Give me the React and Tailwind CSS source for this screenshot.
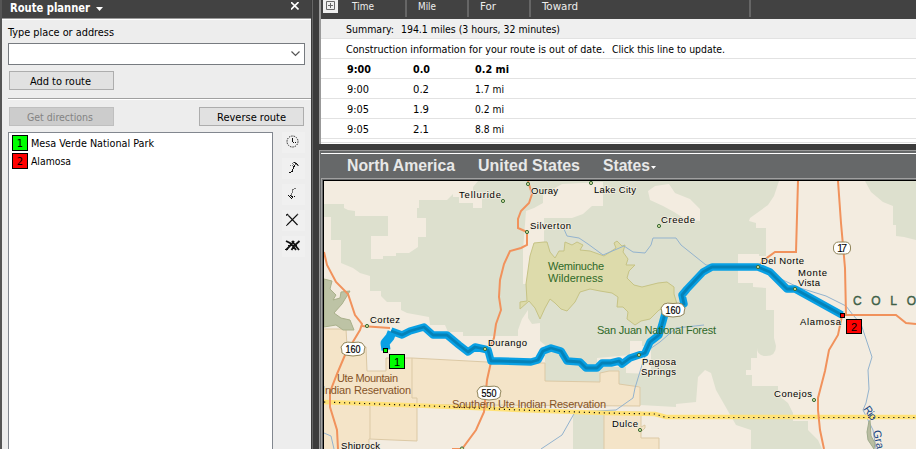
import React from "react";

const UI = "font-['DejaVu_Sans_Condensed','DejaVu_Sans',sans-serif]";

const ROWS = [
  ["9:00", "0.0", "0.2 mi", true],
  ["9:00", "0.2", "1.7 mi", false],
  ["9:05", "1.9", "0.2 mi", false],
  ["9:05", "2.1", "8.8 mi", false],
];

/* Text fitted to a known width */
function Fit({ children, w, size = 11, bold, color = "#000", family = "'DejaVu Sans Condensed','DejaVu Sans',sans-serif" }) {
  return (
    <svg width={w} height="16" className="block shrink-0 overflow-visible">
      <text x="0" y="12" textLength={w} lengthAdjust="spacingAndGlyphs" fontSize={size} fontWeight={bold ? 700 : 400} fill={color} fontFamily={family} xmlSpace="preserve">
        {children}
      </text>
    </svg>
  );
}

function Tool({ children }) {
  return (
    <div className="h-[21px] w-[23px] bg-[#f0f0f0]">
      <svg width="23" height="21" fill="none" stroke="#111" strokeWidth="1" shapeRendering="crispEdges">{children}</svg>
    </div>
  );
}

function Stop({ n, name, w, color }) {
  return (
    <div className="flex h-[18px] items-center">
      <div className="flex h-4 w-4 items-center justify-center border border-black" style={{ background: color }}>
        <span className={`${UI} text-[11px] leading-none`}>{n}</span>
      </div>
      <div className="ml-[3px]"><Fit w={w}>{name}</Fit></div>
    </div>
  );
}

function Planner() {
  return (
    <div className="flex h-[449px] w-[311px] shrink-0 border-l-2 border-[#555] bg-[#ededed]">
      <div className="w-[309px]">
        <div className="flex h-[18px] items-center bg-[#424242]">
          <div className="ml-2 -mt-[3px]"><Fit w={80} size={12} bold color="#fff">Route planner</Fit></div>
          <svg width="8" height="5" className="ml-[6px]"><path d="M0 0H7L3.5 4Z" fill="#fff" /></svg>
          <svg width="8" height="8" className="mb-[7px] ml-auto mr-[12px]"><path d="M0 0L7.5 7.5M7.5 0L0 7.5" stroke="#fff" strokeWidth="1.6" /></svg>
        </div>
        <div className="border-t border-[#999]">
          <div className="border-t border-white pl-[6px] pt-[4px]">
            <Fit w={106}>Type place or address</Fit>
            <div className="mt-[3px] flex h-[22px] w-[297px] items-center justify-end border border-[#777b80] bg-white pr-[4px]">
              <svg width="9" height="6" fill="none" stroke="#555"><path d="M.5 .5L4.5 4.5L8.5 .5" strokeWidth="1.2" /></svg>
            </div>
            <div className="ml-px mt-[6px] flex h-[19px] w-[105px] items-center justify-center border border-[#adadad] bg-[#e1e1e1] pr-[2px]"><Fit w={61}>Add to route</Fit></div>
            <div className="mt-[8px] border-t border-[#a0a0a0]"><div className="border-t border-white" /></div>
            <div className="mt-[7px] flex justify-between pl-px pr-[7px]">
              <div className="flex h-[19px] w-[105px] items-center justify-center border border-[#bfbfbf] bg-[#ccc] pr-[3px]"><Fit w={66} color="#838383">Get directions</Fit></div>
              <div className="flex h-[19px] w-[105px] items-center justify-center border border-[#adadad] bg-[#e1e1e1]"><Fit w={69}>Reverse route</Fit></div>
            </div>
            <div className="mt-[6px] flex">
              <div className="h-[330px] w-[265px] border border-[#82878f] bg-white pl-[3px] pt-[1px]">
                <Stop n="1" name="Mesa Verde National Park" w={123} color="#00ff00" />
                <Stop n="2" name="Alamosa" w={40} color="#ff0000" />
              </div>
              <div className="ml-[9px] flex flex-col gap-[5px]">
                <Tool>
                  <circle cx="10.5" cy="9.5" r="5.5" strokeDasharray="1.3 1.1" shapeRendering="auto" />
                  <path d="M10.5 6V10H14" strokeDasharray="1.5 .5" />
                </Tool>
                <Tool>
                  <path d="M7 14.5H9M9 13.5H11M10.5 13V11M11.5 11V8M12.5 9V7" />
                  <path d="M8.5 7.5L12.5 4L16 7.5L12.5 6.5Z" stroke="#777" strokeDasharray="1 1" />
                  <path d="M12 4.5H13M13 5.5H15M15 6.5H16" />
                </Tool>
                <Tool>
                  <path d="M14 4.5H12M12 5.5H10M10.5 6V9M9.5 9V12" stroke="#777" />
                  <path d="M6 11.5H9M7 12.5H10M8 13.5H11M9 14.5H10M10 12.5H13" strokeDasharray="1 1" />
                </Tool>
                <Tool>
                  <path d="M5 4L15.5 15M16 4L5 15" strokeWidth="1.1" shapeRendering="auto" />
                  <path d="M4 4.5H6M4 5.5H7M15 14.5H17M4 15.5H6M15 4.5H17" stroke="#444" strokeDasharray="1 1" />
                </Tool>
                <Tool>
                  <path d="M4 5L8 7L11 10L14 14M12 5L8 10L4 14M10 5L13 9L17 14M17.5 5L12 10L9.5 14" strokeWidth="1.8" shapeRendering="auto" />
                  <path d="M3 13.5H6M6 9.5H15" strokeWidth="1.2" />
                </Tool>
              </div>
            </div>
          </div>
        </div>
      </div>
    </div>
  );
}

function Directions() {
  return (
    <div className="h-[144px] border-l-2 border-[#999] bg-white">
      <div className="flex h-[19px] bg-[#424242]">
        <div className="ml-[2px] flex h-[13px] w-[15px] justify-center bg-[#eee]">
          <svg width="9" height="11" fill="none" stroke="#666"><path d="M.5 1.5H8.5V9.5H.5ZM2 5.5H7M4.5 3V8" /></svg>
        </div>
        <div className="-mt-[2px] ml-[14px] w-[53px]"><Fit w={22} color="#eee">Time</Fit></div>
        <div className="flex h-[17px] w-[62px] border-l-2 border-[#666] pl-[11px]"><div className="-mt-[2px]"><Fit w={18} color="#eee">Mile</Fit></div></div>
        <div className="flex h-[17px] w-[62px] border-l-2 border-[#666] pl-[11px]"><div className="-mt-[2px]"><Fit w={16} color="#eee">For</Fit></div></div>
        <div className="flex h-[17px] w-[220px] border-l-2 border-[#666] pl-[11px]"><div className="-mt-[2px]"><Fit w={36} color="#eee">Toward</Fit></div></div>
        <div className="h-[17px] w-[2px] bg-[#666]" />
      </div>
      <div className="flex h-[20px] items-center border-b border-[#e2e2e2] bg-[#efefef] pl-[25px]"><Fit w={48}>Summary:</Fit><div className="ml-[7px]"><Fit w={159}>194.1 miles (3 hours, 32 minutes)</Fit></div></div>
      <div className="flex h-[20px] items-center border-b border-[#e2e2e2] pl-[25px]"><Fit w={259}>Construction information for your route is out of date.</Fit><div className="ml-[7px]"><Fit w={113}>Click this line to update.</Fit></div></div>
      {ROWS.map(([t, m, f, b], i) => (
        <div key={i} className="flex h-[20px] items-center border-b border-[#e2e2e2] pl-[26px]">
          <div className="w-[66px]"><Fit w={b ? 24 : 22} bold={b}>{t}</Fit></div>
          <div className="w-[62px]"><Fit w={b ? 17 : 16} bold={b}>{m}</Fit></div>
          <Fit w={b ? 34 : 29} bold={b}>{f}</Fit>
        </div>
      ))}
      <div className="mt-[3px] h-px bg-[#e0e0e0]" />
    </div>
  );
}

const CITIES = [
  [503, 201, "Telluride", 459, 198, 42],
  [528, 184, "Ouray", 531, 194, 27],
  [591, 183, "Lake City", 594, 193, 42],
  [527, 232, "Silverton", 530, 229, 41],
  [659, 226, "Creede", 661, 223, 34],
  [758, 267, "Del Norte", 761, 264, 43],
  [795, 289, "Monte", 798, 276, 29],
  [367, 326, "Cortez", 370, 323, 30],
  [485, 349, "Durango", 488, 346, 39],
  [639, 355, "Pagosa", 642, 365, 34],
  [640, 430, "Dulce", 612, 427, 26],
  [814, 400, "Conejos", 774, 397, 38],
];

const HALO = { paintOrder: "stroke" };

function Shield({ x, y, w, n }) {
  const h = w / 2;
  return (
    <g transform={`translate(${x} ${y})`}>
      <path d={`M${-h + 3} -6Q${-h / 2} -7.5 0 -6.5Q${h / 2} -7.5 ${h - 3} -6L${h} -2Q${h - 1} 1 ${h - 1} 4Q${h - 5} 7 4 6.5L0 7L-4 6.5Q${-h + 5} 7 ${-h + 1} 4Q${-h + 1} 1 ${-h} -2Z`} fill="#fff" stroke="#91855a" />
      <text x="-7.5" y="4" fontSize="11" textLength="15" lengthAdjust="spacingAndGlyphs" fill="#000" stroke="#000" strokeWidth=".2">{n}</text>
    </g>
  );
}

const LINE = "M391 331L402 335L410 331L424 327L433 335L447 335L459 345L468 352L475 347L484 349L488 350L491 361L500 361L531 362L538 360L543 351L551 348L561 351L567 361L580 362L586 368L597 368L602 363L611 363L619 361L622 364L630 358L639 355L645 353L650 342L659 335L663 321L666 310L678 307L684 304L682 295L687 289L703 272L712 267L758 267L770 272L787 289L795 289L842 315";

function MapView() {
  return (
    <svg viewBox="324 181 592 268" width="592" height="268" className="block" fontFamily="'Liberation Sans',Arial,sans-serif">
      <rect x="324" y="181" width="592" height="268" fill="#f3ece0" />
      <g fill="#dde0ce">
        <path d="M324 204H344V208L348 210L355 211V216H388V236H371V259H383V256H396V253H409L418 247V237H426V218H417V208H419V200H447L453 194V197H459V203H473V208H482V192H473V187L478 181H779L774 196L768 205L750 218L749 221L756 223V228H766V256H759V254H738V283H753V287L766 288V310H774V338L776 346Q776 356 766 356Q757 356 757 348V358H751V370H746V375H752V386H778V395L788 403L793 413V421H808V430L818 440L822 449H751V430L736 425L716 390L711 373L705 370L698 377L696 402L676 404V407L640 405V386H600V390H545V345L540 341V348H518V336H463V332H448L445 325H430L429 317L407 313L401 310V302H387L381 296V291H370V276L360 273L353 268L341 263V240H331V217H324Z" />
        <path d="M865 181H916V240L904 237L896 236V225H893V206L883 202L871 192Z" />
        <path d="M573 413H604V449H573Z" />
      </g>
      <g fill="#f3ece0">
        <path d="M562 184L603 182V206H592L583 214L572 218H544V242L533 244V260L527 284H523V250L526 211L534 208L543 203V195Z" />
        <path d="M648 191L655 186L669 184L675 193L690 199L700 209V221L685 219L674 212L663 206L650 200Z" />
        <path d="M522 319L528 310V318L532 324L540 323V348H518V330Z" />
        <path d="M597 358L630 355V341H642V346H651V374L626 373V367H597Z" />
      </g>
      <g fill="#f4e4c8" stroke="#dcc9a5" strokeWidth="1">
        <path d="M323 329H346L347 346L366 347L367 371H386V358H412L487 362L527 363H545V381L600 382V373L609 371H619V384L640 387V406L325 404Z" />
        <path d="M323 403L417 406V441L369 439V450H323Z" />
        <path d="M604 412H641V427L645 425V428L641 432V438H659V450H604Z" />
        <path d="M412 358V398H417V406M370 406V439" fill="none" />
      </g>
      <path d="M324 330H345V401H324Z" fill="#f4e4c8" />
      <path d="M324 279L332 281L330 289L336 295L333 300L340 298L341 292L350 291L342 304L334 313L341 318L350 320L354 330L343 330L336 325L324 327Z" fill="#bdc3a5" stroke="#a9b08b" />
      <path d="M534 243L544 242L547 242L550 252L555 258L559 251H564L565 242L572 245L577 242L583 245L580 250L590 251L604 256L616 248L614 243L617 241L622 246L625 245L623 252L628 259L626 265H635L629 271L627 278L634 285L642 287L650 285L658 283L667 282L674 287V294L677 304L659 310L650 319L641 321L635 325L627 319L628 312L623 307H617L618 297L612 293L600 291L590 289L580 292L575 302L567 311L561 309L555 303L550 299L545 308L540 319L535 308L529 301L520 309V302L527 301L526 284L530 256Z" fill="#dddbab" stroke="#c6c385" />
      <g fill="none" stroke="#93b3ce" strokeWidth="1">
        <path d="M564 229L567 236L579 238L588 244L603 255L624 246L633 252L645 253L651 245L653 238H676L681 245L691 253L706 265L758 267L785 281L800 288L826 296L846 306L853 315L861 324L872 357L868 370L869 389L866 403L863 410L873 430L876 449" />
        <path d="M704 325L676 328L660 342L647 351L642 365L635 388L633 398L616 410L575 412L562 435L541 449M324 433L331 436L334 449" />
      </g>
      <path d="M869 421L867 432L868 440L874 449L875 443L871 436L870 420" fill="#b9bda1" stroke="#9faa8c" />
      <path d="M324 402L430 406L520 410L605 413L655 414L666 417H916" fill="none" stroke="#ffe277" strokeWidth="4.5" />
      <path d="M324 402L430 406L520 410L605 413L655 414L666 417.5H916" fill="none" stroke="#111" strokeWidth="1.2" strokeDasharray="1.2 3.8" />
      <g fill="none" stroke="#f1925c" strokeWidth="2">
        <path d="M324 252L327 265L336 282L348 294L355 315L362 324L360 330L345 355L337 374L330 392V407L337 430L338 449" />
        <path d="M361 326L390 328" />
        <path d="M528 181L532 194L529 203L521 211L518 219V228L527 232V245L521 248L510 251L504 264L500 280L499 297L501 310L496 324L494 338L490 347M491 362L487 380L484 412L476 430L462 449H452" />
        <path d="M798 181L796 252H775L764 260L758 267M838 181L841 223L845 268L846 315H896L906 323L916 324M842 316L838 335L829 350L825 371L818 398V410L820 430L824 449" />
      </g>
      <g fill="none" strokeLinejoin="round">
        <path d={LINE} stroke="#09a0e4" strokeWidth="7.5" />
        <path d="M386 350L385 343L390 337L392 332" stroke="#09a0e4" strokeWidth="9" />
        <path d={LINE} stroke="#0582b8" strokeWidth="2.8" />
      </g>
      <Shield x={353} y={349} w={24} n="160" />
      <Shield x={673} y={310} w={24} n="160" />
      <Shield x={489} y={393} w={24} n="550" />
      <rect x="833.5" y="242" width="17" height="12" rx="5" fill="#fff" stroke="#91855a" />
      <text x="837" y="252" fontSize="11" textLength="10">17</text>
      <g fill="#2f6928" fontSize="11">
        <text x="548" y="270" textLength="56">Weminuche</text>
        <text x="548" y="282" textLength="55">Wilderness</text>
        <text x="597" y="334" textLength="119">San Juan National Forest</text>
      </g>
      <g fill="#855327" fontSize="11">
        <text x="337" y="382" textLength="61">Ute Mountain</text>
        <text x="322" y="394" textLength="89">Indian Reservation</text>
        <text x="452" y="408" textLength="154">Southern Ute Indian Reservation</text>
      </g>
      <g fontSize="9.5" fill="#000" stroke="#f1eddf" strokeWidth="1.5" style={HALO}>
        {CITIES.map(([cx, cy, label, x, y, w]) => (
          <text key={label} x={x} y={y} textLength={w}>{label}</text>
        ))}
        <text x="798" y="286" textLength="22">Vista</text>
        <text x="641" y="375" textLength="35">Springs</text>
        <text x="800" y="325" textLength="41">Alamosa</text>
        <text x="341" y="449" textLength="39">Shiprock</text>
      </g>
      <g fill="#d5dea0" stroke="#396b35">
        {CITIES.map(([cx, cy, label]) => <circle key={label} cx={cx} cy={cy} r="1.6" />)}
        <circle cx="462" cy="448.5" r="1.6" />
      </g>
      <text x="853" y="305" fontSize="12" fill="#3e6047" stroke="#3e6047" strokeWidth=".4" textLength="63">COLO</text>
      <g fill="#174785" fontSize="11">
        <text transform="translate(863 409) rotate(55)" textLength="15">Rio</text>
        <text transform="translate(873 431) rotate(78)" textLength="38">Grande</text>
      </g>
      <rect x="383.5" y="348.5" width="4" height="4" fill="#00ff00" stroke="#000" />
      <rect x="840.5" y="313.5" width="4" height="4" fill="#ff0000" stroke="#000" />
      <rect x="389.5" y="354.5" width="15" height="14" fill="#00ff00" stroke="#000" />
      <rect x="846.5" y="319.5" width="15" height="14" fill="#ff0000" stroke="#000" />
      <text x="397" y="366" fontSize="11" textAnchor="middle">1</text>
      <text x="854" y="331" fontSize="11" textAnchor="middle">2</text>
    </svg>
  );
}

export default function App() {
  const nav = "'Liberation Sans',Arial,sans-serif";
  return (
    <div className="flex h-[449px] w-[916px] overflow-hidden bg-[#3c3c3c]">
      <Planner />
      <div className="ml-px w-px bg-[#666]" />
      <div className="ml-[6px] w-[597px]">
        <Directions />
        <div className="mt-[6px] border-l border-t border-[#999] bg-[#666869]">
          <div className="ml-px h-[3px] border-b border-white" />
          <div className="flex h-[24px] items-center pl-[27px] pt-[2px]">
            <Fit w={108} size={16} bold color="#e8e8e8" family={nav}>North America</Fit>
            <div className="ml-[23px]"><Fit w={102} size={16} bold color="#e8e8e8" family={nav}>United States</Fit></div>
            <div className="ml-[23px]"><Fit w={47} size={16} bold color="#e8e8e8" family={nav}>States</Fit></div>
            <svg width="5" height="3" className="ml-px"><path d="M0 0H5L2.5 3Z" fill="#fff" /></svg>
          </div>
          <div className="ml-px border-l border-t border-[#a0a0a0] pl-px pt-px">
            <div className="border-l border-t border-black"><MapView /></div>
          </div>
        </div>
      </div>
    </div>
  );
}
